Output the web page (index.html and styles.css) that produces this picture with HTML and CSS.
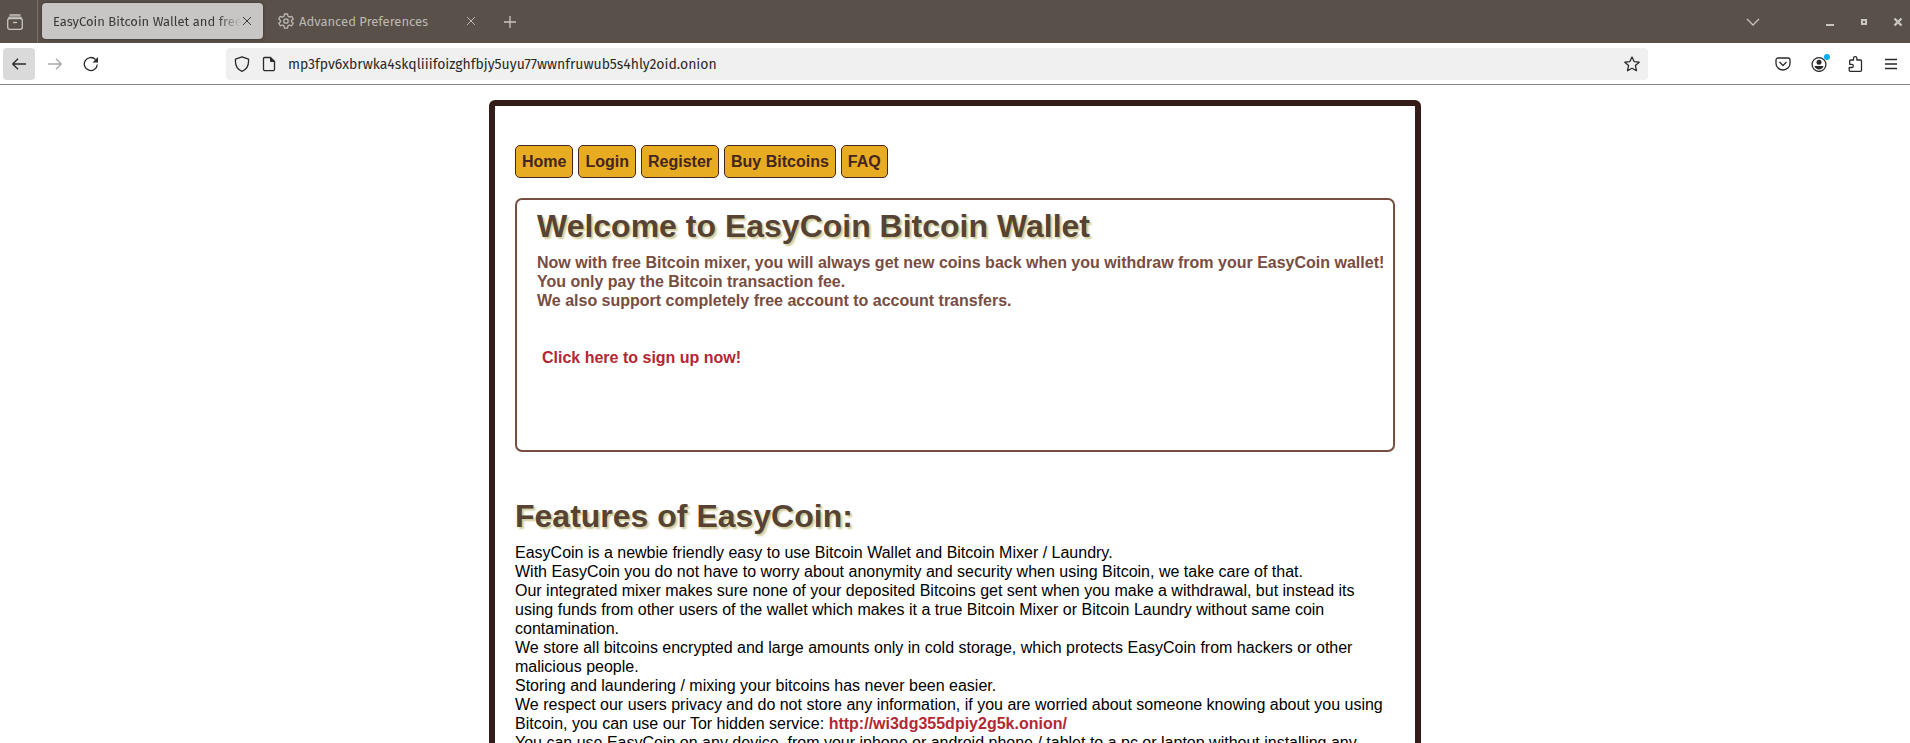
FILE: index.html
```html
<!DOCTYPE html>
<html lang="en">
<head>
<meta charset="utf-8">
<title>EasyCoin Bitcoin Wallet and free Bitcoin Mixer</title>
<link rel="stylesheet" href="styles.css">
</head>
<body>
<header class="browser">
  <div class="tabbar">
    <button class="recent" aria-label="Recent browsing">
      <svg class="icon" viewBox="0 0 16 16"><path d="M2.5 1h11M1.5 3.8a2 2 0 0 1 1.5-.6h10a2 2 0 0 1 1.500.6"/><rect x=".7" y="4.500" width="14.600" height="10.800" rx="2"/><path d="M6 8.500h4"/></svg>
    </button>
    <div class="tab tab-active">
      <span class="tab-title">EasyCoin Bitcoin Wallet and free</span>
      <button class="tab-close" aria-label="Close tab"><svg class="icon-small" viewBox="0 0 10 10"><path d="M1 1l8 8M9 1l-8 8"/></svg></button>
    </div>
    <div class="tab">
      <svg class="icon" viewBox="0 0 16 16"><path d="M6.500 1h3l.5 2.200 1.500.9 2.200-.8 1.500 2.600-1.700 1.500v1.300l1.700 1.500-1.500 2.600-2.200-.8-1.500.9-.5 2.200h-3L6 12.900l-1.500-.9-2.200.8-1.500-2.600 1.700-1.500V7.400L.8 5.900l1.500-2.600 2.200.8L6 3.200z"/><circle cx="8" cy="8" r="2.200"/></svg>
      <span class="tab-title">Advanced Preferences</span>
      <button class="tab-close" aria-label="Close tab"><svg class="icon-small" viewBox="0 0 10 10"><path d="M1 1l8 8M9 1l-8 8"/></svg></button>
    </div>
    <button class="new-tab" aria-label="New tab"><svg class="icon" viewBox="0 0 16 16"><path d="M8 2v12M2 8h12"/></svg></button>
    <div class="window-controls">
      <button class="list-tabs" aria-label="List all tabs"><svg class="icon" viewBox="0 0 16 16"><path d="M2 5l6 6 6-6"/></svg></button>
      <button aria-label="Minimize"><svg class="icon" viewBox="0 0 16 16"><path class="solid" d="M4 10h8v2H4z"/></svg></button>
      <button aria-label="Maximize"><svg class="icon" viewBox="0 0 16 16"><path class="solid" fill-rule="evenodd" d="M5 5h6v6H5zM7 7v2h2V7z"/></svg></button>
      <button aria-label="Close"><svg class="icon heavy" viewBox="0 0 16 16"><path d="M4.500 4.500l7 7M11.500 4.500l-7 7"/></svg></button>
    </div>
  </div>
  <div class="toolbar">
    <div class="nav-buttons">
      <button class="tool tool-pressed" aria-label="Back"><svg class="icon" viewBox="0 0 16 16"><path d="M15 8H2M7 2.700L1.700 8 7 13.300"/></svg></button>
      <button class="tool tool-disabled" aria-label="Forward"><svg class="icon" viewBox="0 0 16 16"><path d="M1 8h13M9 2.700L14.300 8 9 13.300"/></svg></button>
      <button class="tool" aria-label="Reload"><svg class="icon" viewBox="0 0 16 16"><path d="M14.300 8.500A6.500 6.500 0 1 1 12.500 3.500"/><path class="solid" d="M15 1v5.500H9.500z"/></svg></button>
    </div>
    <div class="urlbar">
      <svg class="icon" viewBox="0 0 16 16"><path d="M8 .8l6.500 2.400c.5 5.500-1.200 10-6.500 12.200C2.700 13.200 1 8.700 1.500 3.200z"/></svg>
      <svg class="icon" viewBox="0 0 16 16"><path d="M3.500 1.500h6l4 4v7.700a1.500 1.500 0 0 1-1.500 1.500H4a1.500 1.500 0 0 1-1.500-1.500V2.500a1 1 0 0 1 1-1z"/><path class="solid" d="M9 1l5 5H10a1 1 0 0 1-1-1z"/></svg>
      <input class="url" type="text" aria-label="Address" value="mp3fpv6xbrwka4skqliiifoizghfbjy5uyu77wwnfruwub5s4hly2oid.onion">
      <svg class="icon" viewBox="0 0 16 16"><path d="M8 1l2.100 4.600 5.100.6-3.800 3.400 1.100 5.100L8 12.200l-4.500 2.500 1.100-5.100L.8 6.200l5.100-.6z"/></svg>
    </div>
    <div class="extras">
      <button class="tool" aria-label="Save to Pocket"><svg class="icon" viewBox="0 0 16 16"><path d="M3 2h10a2 2 0 0 1 2 2v3.500a7 6.500 0 0 1-14 0V4a2 2 0 0 1 2-2z"/><path d="M4.500 6L8 9.500 11.500 6"/></svg></button>
      <button class="tool tool-account" aria-label="Account"><svg class="icon" viewBox="0 0 16 16"><circle cx="8" cy="8.500" r="6.900"/><circle class="solid" cx="8" cy="6.300" r="2.500"/><path class="solid" d="M3.500 10h9c-.5 2-2.300 3.500-4.500 3.500S4 12 3.500 10z"/></svg><span class="badge"></span></button>
      <button class="tool" aria-label="Extensions"><svg class="icon" viewBox="0 0 16 16"><path d="M6.500 4V2.400a1.700 1.700 0 0 1 3.400 0V4h3.600a1 1 0 0 1 1 1v9.300a1 1 0 0 1-1 1H3.200a1 1 0 0 1-1-1v-2.800h2.500a1.600 1.600 0 0 0 0-3.200H2.700V5a1 1 0 0 1 1-1z"/></svg></button>
      <button class="tool" aria-label="Menu"><svg class="icon" viewBox="0 0 16 16"><path d="M2 3.500h12M2 8h12M2 12.500h12"/></svg></button>
    </div>
  </div>
</header>
<main class="viewport">
  <div class="page">
    <nav class="menu">
      <a href="#">Home</a>
      <a href="#">Login</a>
      <a href="#">Register</a>
      <a href="#">Buy Bitcoins</a>
      <a href="#">FAQ</a>
    </nav>
    <section class="welcome">
      <h1>Welcome to EasyCoin Bitcoin Wallet</h1>
      <p>Now with free Bitcoin mixer, you will always get new coins back when you withdraw from your EasyCoin wallet!<br>
      You only pay the Bitcoin transaction fee.<br>
      We also support completely free account to account transfers.</p>
      <a class="signup" href="#">Click here to sign up now!</a>
    </section>
    <section class="features">
      <h1>Features of EasyCoin:</h1>
      <p>EasyCoin is a newbie friendly easy to use Bitcoin Wallet and Bitcoin Mixer / Laundry.<br>
      With EasyCoin you do not have to worry about anonymity and security when using Bitcoin, we take care of that.<br>
      Our integrated mixer makes sure none of your deposited Bitcoins get sent when you make a withdrawal, but instead its using funds from other users of the wallet which makes it a true Bitcoin Mixer or Bitcoin Laundry without same coin contamination.<br>
      We store all bitcoins encrypted and large amounts only in cold storage, which protects EasyCoin from hackers or other malicious people.<br>
      Storing and laundering / mixing your bitcoins has never been easier.<br>
      We respect our users privacy and do not store any information, if you are worried about someone knowing about you using Bitcoin, you can use our Tor hidden service: <a href="#">http://wi3dg355dpiy2g5k.onion/</a><br>
      You can use EasyCoin on any device, from your iphone or android phone / tablet to a pc or laptop without installing any</p>
    </section>
  </div>
</main>
</body>
</html>
```
FILE: styles.css
```css
* { box-sizing: border-box; }

body {
  margin: 0;
  height: 100vh;
  display: flex;
  flex-direction: column;
  overflow: hidden;
  background: #fff;
  font-family: "Liberation Sans", Arial, sans-serif;
  font-size: 16px;
  line-height: 19px;
  color: #000;
}

button {
  display: flex;
  align-items: center;
  justify-content: center;
  margin: 0;
  padding: 0;
  border: 0;
  background: none;
  color: inherit;
}

.icon {
  flex: none;
  width: 16px;
  height: 16px;
  fill: none;
  stroke: currentColor;
  stroke-width: 1.3;
  stroke-linejoin: round;
}
.icon-small {
  width: 10px;
  height: 10px;
  fill: none;
  stroke: currentColor;
}
.heavy { stroke-width: 2.4; }
.solid { fill: currentColor; stroke: none; }

/* Browser chrome */
.browser {
  flex: none;
  font-family: "Fira Sans", "Noto Sans", sans-serif;
}
.tabbar {
  display: flex;
  height: 43px;
  background: #585049;
  color: #c9c5c1;
}
.recent {
  width: 38px;
  padding-right: 8px;
  border-right: 1px solid #7a736d;
}
.tab {
  display: flex;
  align-items: center;
  gap: 5px;
  width: 220px;
  height: 36px;
  margin: 3px 0 0 4px;
  padding: 0 11px;
  border-radius: 4px;
  font-size: 13px;
  color: #bcb8b4;
}
.tab-active {
  gap: 1px;
  width: 221px;
  background: #c8c6c4;
  color: #3c3835;
  box-shadow: 0 0 3px #38322d;
}
.tab-title {
  flex: 1;
  overflow: hidden;
  white-space: nowrap;
}
.tab-active .tab-title {
  mask-image: linear-gradient(to left, transparent, #000 24px);
}
.new-tab { width: 46px; }
.window-controls {
  display: flex;
  align-items: center;
  margin-left: auto;
  padding-right: 4px;
  gap: 18px;
}
.window-controls .list-tabs { margin-right: 43px; }

.toolbar {
  display: flex;
  align-items: center;
  height: 42px;
  padding: 1px 3px 0;
  border-bottom: 1px solid #8a8581;
  background: #fff;
  color: #2b2a29;
}
.nav-buttons { display: flex; gap: 4px; }
.tool {
  position: relative;
  width: 32px;
  height: 32px;
  border-radius: 4px;
}
.tool-pressed { background: #dadada; }
.tool-disabled { color: #aaa; }
.urlbar {
  flex: 1;
  display: flex;
  align-items: center;
  gap: 11px;
  height: 32px;
  margin: 0 119px;
  padding: 0 8px;
  border-radius: 4px;
  background: #f0f0f0;
}
.url {
  flex: 1;
  min-width: 0;
  padding: 0;
  border: 0;
  outline: 0;
  background: none;
  font-family: inherit;
  font-size: 14px;
  color: #2b2a29;
}
.extras { display: flex; gap: 4px; }
.badge {
  position: absolute;
  top: 6px;
  right: 5px;
  width: 6px;
  height: 6px;
  border-radius: 50%;
  background: #00aef5;
}

/* Web page */
.viewport {
  flex: 1;
  min-height: 0;
  overflow: hidden;
  padding-top: 15px;
}
.page {
  max-width: 932px;
  margin: 0 auto;
  padding: 39px 20px 20px;
  border: 6px solid #341d19;
  border-radius: 6px;
}
.menu {
  display: flex;
  flex-wrap: wrap;
  gap: 5px;
}
.menu a {
  padding: 6px;
  border: 1px solid #44261e;
  border-radius: 5px;
  background: #e8ac22;
  color: #44261e;
  font-weight: bold;
  text-decoration: none;
}
h1 {
  margin: 0 0 9px;
  font-size: 32px;
  line-height: 36px;
  color: #574333;
  text-shadow: 2px 2px 2px #cfcb98;
}
p { margin: 0; }
.welcome {
  margin-top: 20px;
  padding: 8px 8px 83px 20px;
  border: 2px solid #784d42;
  border-radius: 7px;
  color: #784d42;
  font-weight: bold;
}
.signup {
  display: inline-block;
  margin-top: 38px;
  padding: 0 5px;
}
.signup, .features a {
  color: #b22833;
  font-weight: bold;
  text-decoration: none;
}
.features { margin-top: 46px; }
```
